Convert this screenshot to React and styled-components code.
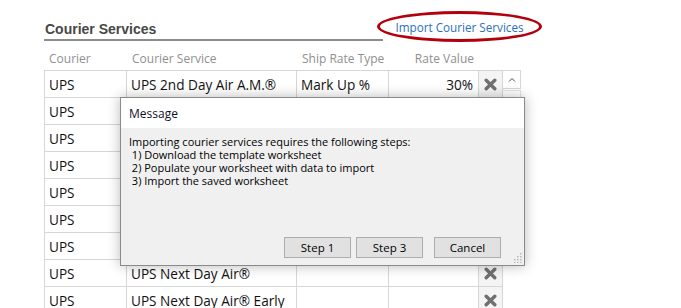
import React from "react";
import styled, { createGlobalStyle } from "styled-components";

const GlobalStyle = createGlobalStyle`
  html, body {
    margin: 0;
    padding: 0;
    background: #ffffff;
  }
  body {
    font-family: "Open Sans", "Noto Sans", sans-serif;
    overflow: hidden;
  }
`;

const Page = styled.div`
  position: relative;
  width: 681px;
  height: 308px;
  overflow: hidden;
  padding: 13px 0 0 44px;
  box-sizing: border-box;
`;

const Section = styled.div`
  width: 477px;
`;

const Header = styled.div`
  display: flex;
  justify-content: space-between;
  align-items: flex-end;
  height: 26px;
  border-bottom: 2px solid #8c8c8c;
  width: 339px;
  position: relative;
`;

const Title = styled.h2`
  margin: 0 0 0 1px;
  font-family: "Liberation Sans", Arial, sans-serif;
  font-weight: 700;
  font-size: 14px;
  line-height: 20px;
  color: #474747;
`;

const ImportLink = styled.a`
  position: absolute;
  left: 333px;
  top: -2px;
  width: 159px;
  height: 25px;
  border: 3px solid #b3000c;
  border-radius: 50%;
  background: #ffffff;
  display: flex;
  align-items: center;
  justify-content: center;
  font-family: "Open Sans", sans-serif;
  font-size: 11.7px;
  color: #2b6fbf;
  text-decoration: none;
  cursor: pointer;
`;

const ColumnLabels = styled.div`
  display: grid;
  grid-template-columns: 83px 170px 92px 90px;
  height: 29px;
  align-items: end;
`;

const ColumnLabel = styled.div`
  padding: 0 ${(p) => (p.right ? "5px" : "0")} 3px ${(p) => (p.right ? "0" : "5px")};
  text-align: ${(p) => (p.right ? "right" : "left")};
  font-size: 12px;
  color: #8f8f8f;
  line-height: 16px;
`;

const TableArea = styled.div`
  display: flex;
`;

const Table = styled.div`
  border-top: 1px solid #d6d6d6;
  border-left: 1px solid #d6d6d6;
`;

const Row = styled.div`
  display: grid;
  grid-template-columns: 82px 170px 92px 90px 24px;
  height: 27px;
`;

const Cell = styled.div`
  border-right: 1px solid #d6d6d6;
  border-bottom: 1px solid #d6d6d6;
  padding: 0 ${(p) => (p.right ? "5px" : "0")} 0 ${(p) => (p.right ? "0" : "4px")};
  display: flex;
  align-items: center;
  justify-content: ${(p) => (p.right ? "flex-end" : "flex-start")};
  font-size: 13.6px;
  color: #111111;
  white-space: nowrap;
  overflow: hidden;
`;

const DeleteCell = styled(Cell)`
  justify-content: center;
  padding: 0;
  background: #f4f4f4;
`;

const Scrollbar = styled.div`
  width: 18px;
  border-top: 1px solid #d6d6d6;
  display: flex;
  flex-direction: column;
`;

const ScrollButton = styled.div`
  height: 17px;
  border-right: 1px solid #d6d6d6;
  border-bottom: 1px solid #d6d6d6;
  display: flex;
  align-items: center;
  justify-content: center;
`;

const ScrollThumb = styled.div`
  height: 60px;
  margin-top: 1px;
  border: 1px solid #e2e2e2;
  border-left: none;
`;

const Dialog = styled.div`
  position: absolute;
  left: 120px;
  top: 97px;
  width: 405px;
  height: 169px;
  box-sizing: border-box;
  border: 1px solid #8a8a8a;
  background: #f0f0f0;
  box-shadow: 0 0 12px rgba(0, 0, 0, 0.28);
  display: flex;
  flex-direction: column;
  font-family: "Open Sans", sans-serif;
`;

const DialogTitle = styled.div`
  height: 30px;
  background: #ffffff;
  display: flex;
  align-items: center;
  padding-left: 8px;
  font-size: 12px;
  color: #10102a;
`;

const DialogBody = styled.div`
  flex: 1;
  padding: 7px 8px 0;
  font-size: 11px;
  line-height: 13px;
  color: #000000;
  white-space: pre;
`;

const DialogButtons = styled.div`
  display: flex;
  justify-content: flex-end;
  padding: 0 23px 7px 0;
  position: relative;
`;

const DialogButton = styled.button`
  width: 67px;
  height: 21px;
  margin-left: ${(p) => p.gap}px;
  padding: 0;
  border: 1px solid #adadad;
  background: #e1e1e1;
  font-family: "Open Sans", sans-serif;
  font-size: 11.5px;
  color: #000000;
`;

const Grip = styled.svg`
  position: absolute;
  right: 2px;
  bottom: 2px;
`;

// rows 2-7 sit under the dialog, only their courier column shows
const rows = [
  ["UPS", "UPS 2nd Day Air A.M.®", "Mark Up %", "30%"],
  ["UPS", "", "", ""],
  ["UPS", "", "", ""],
  ["UPS", "", "", ""],
  ["UPS", "", "", ""],
  ["UPS", "", "", ""],
  ["UPS", "", "", ""],
  ["UPS", "UPS Next Day Air®", "", ""],
  ["UPS", "UPS Next Day Air® Early", "", ""],
];

const DeleteIcon = () => (
  <svg width="13" height="13" viewBox="0 0 13 13">
    <path
      d="M2.2 2.2 L10.8 10.8 M10.8 2.2 L2.2 10.8"
      stroke="#707070"
      strokeWidth="3.4"
      strokeLinecap="round"
    />
  </svg>
);

const ChevronUp = () => (
  <svg width="8" height="5" viewBox="0 0 8 5">
    <path d="M1 4.5 L4 1.5 L7 4.5" stroke="#4a4a4a" strokeWidth="1" fill="none" />
  </svg>
);

const ResizeGrip = () => (
  <Grip width="10" height="10" viewBox="0 0 10 10">
    {[
      [8, 0], [8, 3], [5, 3], [8, 6], [5, 6], [2, 6], [8, 9], [5, 9], [2, 9],
    ].map(([x, y]) => (
      <rect key={`${x}-${y}`} x={x} y={y} width="1.5" height="1.5" fill="#b8b8b8" />
    ))}
  </Grip>
);

const App = () => {
  return (
    <Page>
      <GlobalStyle />
      <Section>
        <Header>
          <Title>Courier Services</Title>
          <ImportLink>Import Courier Services</ImportLink>
        </Header>
        <ColumnLabels>
          <ColumnLabel>Courier</ColumnLabel>
          <ColumnLabel>Courier Service</ColumnLabel>
          <ColumnLabel>Ship Rate Type</ColumnLabel>
          <ColumnLabel right>Rate Value</ColumnLabel>
        </ColumnLabels>
        <TableArea>
          <Table>
            {rows.map((row, i) => (
              <Row key={i}>
                <Cell>{row[0]}</Cell>
                <Cell>{row[1]}</Cell>
                <Cell>{row[2]}</Cell>
                <Cell right>{row[3]}</Cell>
                <DeleteCell>
                  <DeleteIcon />
                </DeleteCell>
              </Row>
            ))}
          </Table>
          <Scrollbar>
            <ScrollButton>
              <ChevronUp />
            </ScrollButton>
            <ScrollThumb />
          </Scrollbar>
        </TableArea>
      </Section>

      <Dialog>
        <DialogTitle>Message</DialogTitle>
        <DialogBody>
          {"Importing courier services requires the following steps:\n 1) Download the template worksheet\n 2) Populate your worksheet with data to import\n 3) Import the saved worksheet"}
        </DialogBody>
        <DialogButtons>
          <DialogButton gap={0}>Step 1</DialogButton>
          <DialogButton gap={5}>Step 3</DialogButton>
          <DialogButton gap={11}>Cancel</DialogButton>
          <ResizeGrip />
        </DialogButtons>
      </Dialog>
    </Page>
  );
};

export default App;
